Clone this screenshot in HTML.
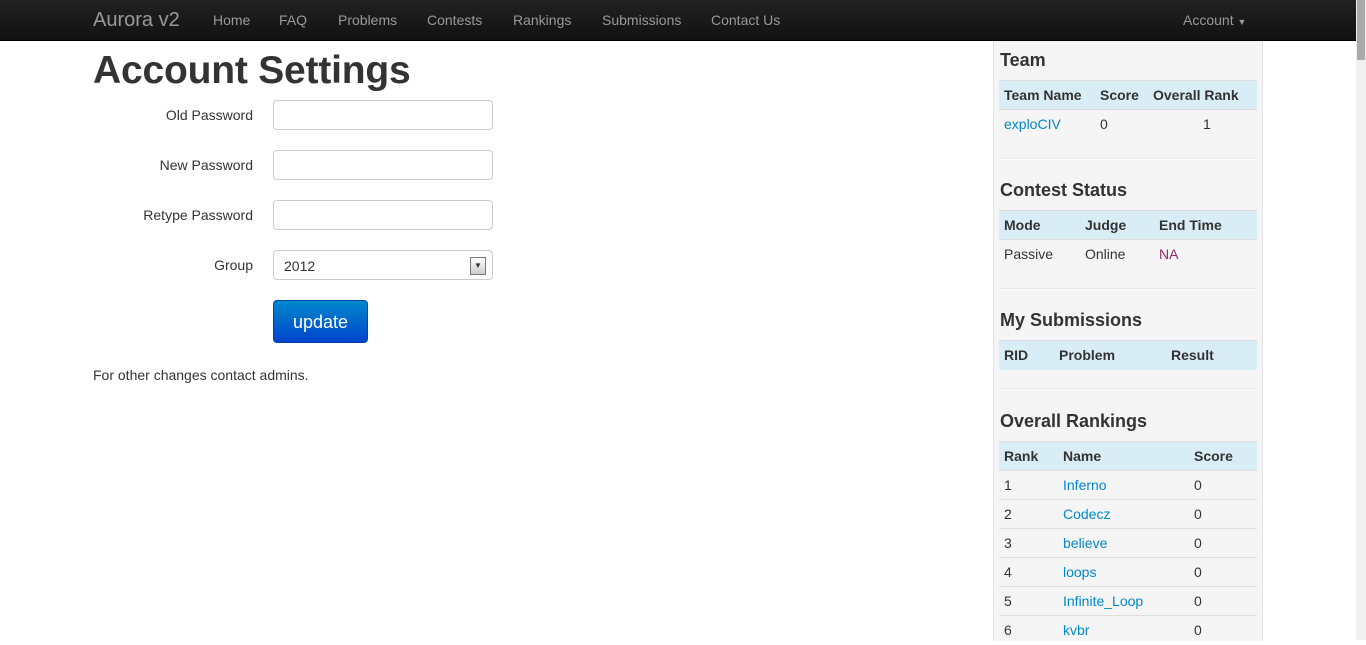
<!DOCTYPE html><html><head><style>
body{margin:0;width:1366px;height:640px;overflow:hidden;font-family:"Liberation Sans",sans-serif;font-size:14px;color:#333;background:#fff;position:relative}
.nav{position:absolute;left:0;top:0;width:1356px;height:40px;background:linear-gradient(#222,#111);border-bottom:1px solid #000}
.nav span{position:absolute;top:12px;color:#999;font-size:14px}
.brand{left:93px;top:9px!important;font-size:20px!important;color:#999}
.sb{position:absolute;left:1356px;top:0;width:10px;height:640px;background:#f0f0f0}
.sb div{position:absolute;left:1px;top:0;width:8px;height:60px;background:#a9a9a9}
h1{position:absolute;left:93px;top:49px;margin:0;font-size:39px;letter-spacing:-0.2px;font-weight:bold;color:#333}
.lbl{position:absolute;width:160px;left:93px;text-align:right;font-size:14px}
.inp{position:absolute;left:273px;width:218px;height:28px;border:1px solid #ccc;border-radius:4px;background:#fff}
.btn{position:absolute;left:273px;top:300px;width:95px;height:43px;border-radius:4px;background:linear-gradient(#0088cc,#0044cc);color:#fff;font-size:18px;text-align:center;line-height:43px;border:1px solid #0044aa;box-sizing:border-box}
.side{position:absolute;left:993px;top:41px;width:268px;height:600px;background:#f5f5f5;border-left:1px solid #e3e3e3;border-right:1px solid #e3e3e3}
.side h3{position:absolute;left:6px;margin:0;font-size:18px;font-weight:bold}
table{position:absolute;left:5px;width:258px;border-collapse:collapse}
td,th{height:29px;padding:0 0 0 5px;text-align:left;font-size:14px;border-top:1px solid #ddd;box-sizing:border-box}
th{background:#d9edf7}
a{color:#0088cc;text-decoration:none}
hr{position:absolute;left:6px;width:258px;margin:0;border:0;border-top:1px solid #e8e8e8;border-bottom:1px solid #fff}
</style></head><body>
<div class="nav"><span class="brand">Aurora v2</span><span style="left:213px">Home</span><span style="left:279px">FAQ</span><span style="left:338px">Problems</span><span style="left:427px">Contests</span><span style="left:513px">Rankings</span><span style="left:602px">Submissions</span><span style="left:711px">Contact Us</span><span style="left:1183px">Account <span style="position:static;font-size:9px">▼</span></span></div>
<div class="sb"><div></div></div>
<h1>Account Settings</h1>
<div class="lbl" style="top:107px">Old Password</div><div class="inp" style="top:100px"></div>
<div class="lbl" style="top:157px">New Password</div><div class="inp" style="top:150px"></div>
<div class="lbl" style="top:207px">Retype Password</div><div class="inp" style="top:200px"></div>
<div class="lbl" style="top:257px">Group</div><div class="inp" style="top:250px"><span style="position:absolute;left:10px;top:7px">2012</span><span style="position:absolute;right:6px;top:6px;width:14px;height:16px;border:1px solid #777;background:linear-gradient(#fff,#ccc);font-size:8px;text-align:center;line-height:16px">▼</span></div>
<div class="btn">update</div>
<div style="position:absolute;left:93px;top:367px">For other changes contact admins.</div>
<div class="side">
<h3 style="top:9px">Team</h3>
<table style="top:39px"><tr><th style="width:96px">Team Name</th><th style="width:53px">Score</th><th>Overall Rank</th></tr><tr><td><a>exploCIV</a></td><td>0</td><td style="padding-left:55px">1</td></tr></table>
<hr style="top:117px">
<h3 style="top:139px">Contest Status</h3>
<table style="top:169px"><tr><th style="width:81px">Mode</th><th style="width:74px">Judge</th><th>End Time</th></tr><tr><td>Passive</td><td>Online</td><td style="color:#942a6e">NA</td></tr></table>
<hr style="top:247px">
<h3 style="top:269px">My Submissions</h3>
<table style="top:299px"><tr><th style="width:55px">RID</th><th style="width:112px">Problem</th><th>Result</th></tr></table>
<hr style="top:347px">
<h3 style="top:370px">Overall Rankings</h3>
<table style="top:400px"><tr><th style="width:59px">Rank</th><th style="width:131px">Name</th><th>Score</th></tr>
<tr><td>1</td><td><a>Inferno</a></td><td>0</td></tr>
<tr><td>2</td><td><a>Codecz</a></td><td>0</td></tr>
<tr><td>3</td><td><a>believe</a></td><td>0</td></tr>
<tr><td>4</td><td><a>loops</a></td><td>0</td></tr>
<tr><td>5</td><td><a>Infinite_Loop</a></td><td>0</td></tr>
<tr><td>6</td><td><a>kvbr</a></td><td>0</td></tr></table>
</div>
</body></html>
